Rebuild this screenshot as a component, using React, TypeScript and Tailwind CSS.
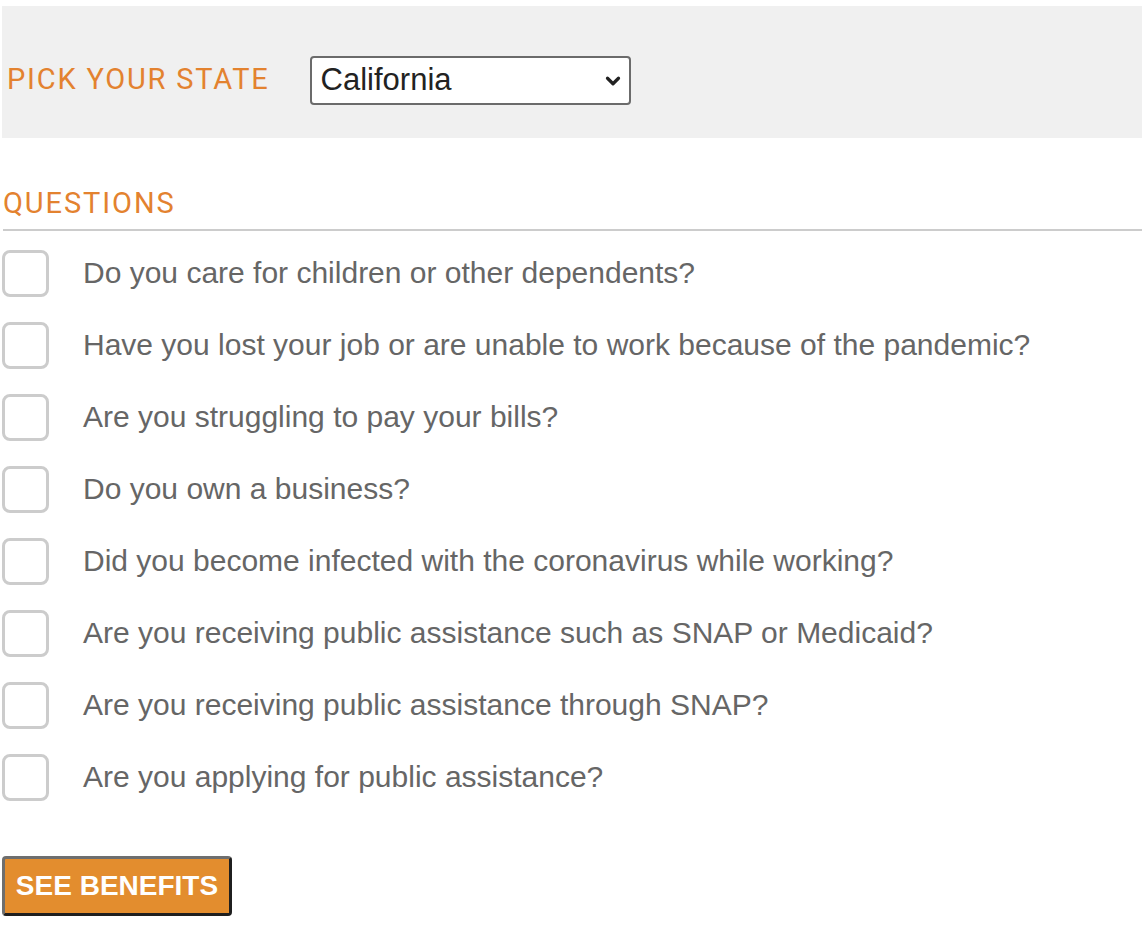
import { ChevronDown } from 'lucide-react';

const questions = [
    'Do you care for children or other dependents?',
    'Have you lost your job or are unable to work because of the pandemic?',
    'Are you struggling to pay your bills?',
    'Do you own a business?',
    'Did you become infected with the coronavirus while working?',
    'Are you receiving public assistance such as SNAP or Medicaid?',
    'Are you receiving public assistance through SNAP?',
    'Are you applying for public assistance?',
];

export default function App() {
    return (
        <div className="min-h-[930px] w-[1142px] bg-white pt-[6px] font-['Liberation_Sans',Arial,sans-serif]">
            <div className="ml-[2px] flex h-[132px] items-center bg-[#f0f0f0] pt-[16px] pl-[5px]">
                <span className="font-['Roboto',sans-serif] text-[29px] tracking-[1.8px] text-[#e3822f]">
                    PICK YOUR STATE
                </span>
                <div className="relative ml-[40px] flex h-[49px] w-[321px] items-center rounded-[4px] border-2 border-[#6b6b6b] bg-white pl-[9px]">
                    <span className="text-[31px] text-[#222]">California</span>
                    <ChevronDown
                        className="absolute right-[5px] top-[12px] text-[#222]"
                        size={22}
                        strokeWidth={3.5}
                    />
                </div>
            </div>

            <div className="mt-[48px] ml-[3px] border-b-2 border-[#cccccc] pb-[9px] font-['Roboto',sans-serif] text-[29px] leading-[34px] tracking-[1.9px] text-[#e3822f]">
                QUESTIONS
            </div>

            <ul className="mt-[19px] flex flex-col gap-[25px]">
                {questions.map((q) => (
                    <li key={q} className="flex h-[47px] items-center">
                        <span className="ml-[2px] h-[47px] w-[47px] shrink-0 rounded-[8px] border-[3px] border-[#cccccc] bg-white" />
                        <span className="ml-[34px] pb-[2px] text-[30px] text-[#666666]">
                            {q}
                        </span>
                    </li>
                ))}
            </ul>

            <button className="mt-[55px] ml-[2px] h-[60px] w-[230px] rounded-[4px] border-[3px] border-t-[#6e6e6e] border-l-[#6e6e6e] border-r-[#1f1f1f] border-b-[#1f1f1f] bg-[#e38d2e] text-[28px] font-bold text-white">
                SEE BENEFITS
            </button>
        </div>
    );
}
